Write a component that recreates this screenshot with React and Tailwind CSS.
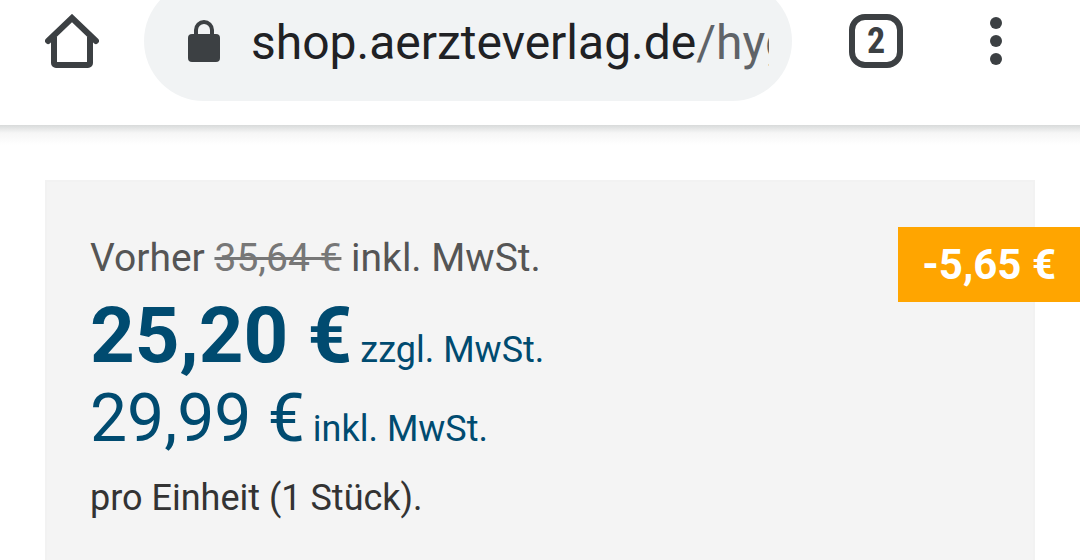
function HomeIcon() {
  return (
    <svg
      viewBox="0 0 54 54"
      className="h-[54px] w-[54px]"
      fill="none"
      stroke="currentColor"
      strokeWidth="6"
      strokeLinecap="round"
      aria-hidden="true"
    >
      <path d="M3 27 27 4l24 23" />
      <path
        d="M9 23v26a2 2 0 0 0 2 2h32a2 2 0 0 0 2-2V23"
        strokeLinecap="butt"
      />
    </svg>
  );
}

function LockIcon() {
  return (
    <svg
      viewBox="0 0 32 42"
      className="h-[42px] w-8 shrink-0 text-[#3c4043]"
      aria-hidden="true"
    >
      <rect y="14" width="32" height="28" rx="4" fill="currentColor" />
      <path
        d="M8 15v-5a8 8 0 0 1 16 0v5"
        fill="none"
        stroke="currentColor"
        strokeWidth="4"
      />
    </svg>
  );
}

function MenuIcon() {
  return (
    <svg
      viewBox="0 0 54 54"
      className="h-[54px] w-[54px]"
      fill="currentColor"
      aria-hidden="true"
    >
      <circle cx="27" cy="9" r="6" />
      <circle cx="27" cy="27" r="6" />
      <circle cx="27" cy="45" r="6" />
    </svg>
  );
}

function BrowserBar() {
  return (
    <header className="-mt-[19px] flex items-center bg-white pb-6 pl-[45px] pr-[57px] text-[#3c4043]">
      <button type="button" aria-label="Startseite" className="shrink-0">
        <HomeIcon />
      </button>

      {/* Barra de direcciones */}
      <button
        type="button"
        className="ml-[45px] flex h-[120px] min-w-0 flex-1 items-center gap-[31px] rounded-full bg-[#f1f3f4] pl-11 pr-[23px] text-left"
      >
        <LockIcon />
        <span className="min-w-0 flex-1 overflow-hidden whitespace-nowrap pt-1 text-5xl leading-[64px] text-[#202124]">
          shop.aerzteverlag.de<span className="text-[#5f6368]">/hyg</span>
        </span>
      </button>

      <button
        type="button"
        className="ml-[57px] flex h-[54px] w-[54px] shrink-0 items-center justify-center rounded-2xl border-6 border-[#3c4043] font-['Roboto_Condensed',Roboto,sans-serif] text-4xl font-bold"
      >
        2
      </button>
      <button type="button" aria-label="Menü" className="ml-[66px] shrink-0">
        <MenuIcon />
      </button>
    </header>
  );
}

function PriceBox() {
  return (
    <section className="relative mx-[45px] flex-1 border-2 border-b-0 border-[#f2f2f2] bg-[#f4f4f4] px-[43px] pt-[46px]">
      <p className="text-[39px] leading-[60px] text-[#555]">
        Vorher <del className="text-[#777]">35,64 €</del> inkl. MwSt.
      </p>
      <p className="text-[78px] leading-[96px] text-[#004b70]">
        <strong className="font-bold">25,20 €</strong>
        <span className="ml-2 text-4xl leading-none">zzgl. MwSt.</span>
      </p>
      <p className="text-[66px] leading-[70px] text-[#004b70]">
        29,99 €
        <span className="ml-2 text-4xl leading-none">inkl. MwSt.</span>
      </p>
      <p className="mt-4 text-4xl leading-[56px] text-[#333]">
        pro Einheit (1 Stück).
      </p>

      {/* Etiqueta de descuento */}
      <span className="absolute -right-[47px] top-[45px] bg-[#ffa500] px-6 text-[42px] font-bold leading-[75px] text-white">
        -5,65 €
      </span>
    </section>
  );
}

function App() {
  return (
    <div className="flex min-h-screen flex-col overflow-hidden bg-white font-[Roboto,sans-serif]">
      <BrowserBar />
      <div className="h-5 bg-linear-to-b from-[#d8dada] via-[#f6f6f6] via-40% to-white" />
      <main className="flex flex-1 flex-col pt-[35px]">
        <PriceBox />
      </main>
    </div>
  );
}

export default App;
